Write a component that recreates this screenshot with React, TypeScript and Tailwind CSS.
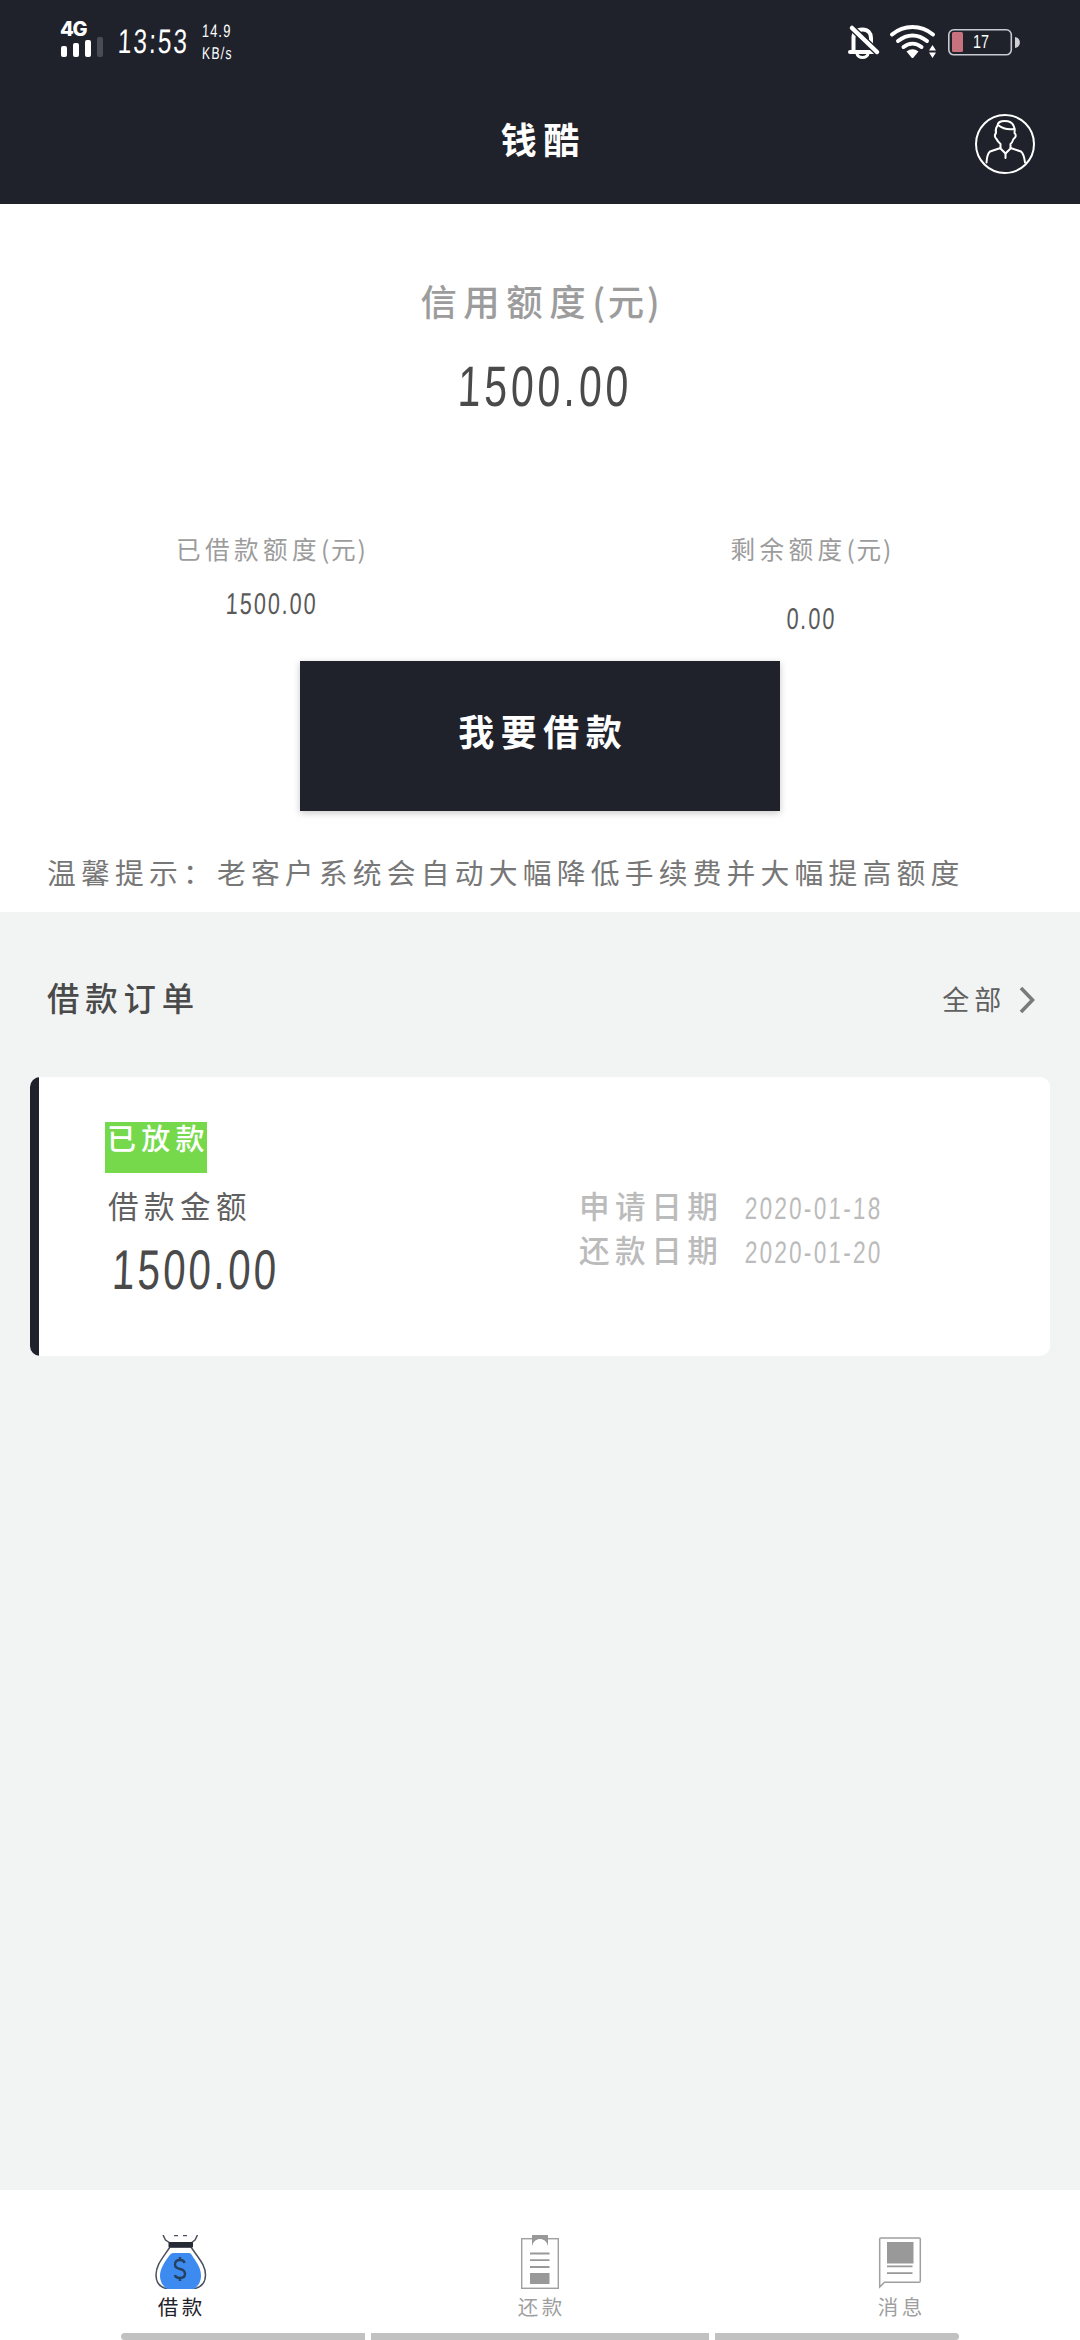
import React from "react";

const CJK = "font-['Noto_Sans_CJK_SC',sans-serif] tracking-[0.18em] whitespace-nowrap";
const NUM = "font-['Liberation_Sans',sans-serif] whitespace-nowrap scale-x-[0.72] -skew-x-3";

function StatusBar() {
  return (
    <div className="flex h-[84px] items-start">
      <div className="ml-[60px] mt-[20px] w-[44px]">
        <div className="font-['Inter',sans-serif] text-[20px] font-extrabold leading-[19px] tracking-[-0.06em]">4G</div>
        <svg width="44" height="20" viewBox="0 0 44 20" className="-mt-[2px]">
          <rect x="1" y="9" width="6" height="11" rx="2" fill="#fff" />
          <rect x="13" y="6" width="6" height="14" rx="2" fill="#fff" />
          <rect x="25" y="3" width="6" height="17" rx="2" fill="#fff" />
          <rect x="37" y="0" width="6" height="20" rx="2" fill="#4b4b55" />
        </svg>
      </div>
      <div className={`${NUM} ml-[14px] mt-[25px] w-[70px] origin-left text-[34px] leading-[32px] tracking-[0.08em]`}>13:53</div>
      <div className="ml-[14px] mt-[20px] w-[40px]">
        <div className={`${NUM} origin-left text-[18px] leading-[22px] tracking-[0.08em]`}>14.9</div>
        <div className={`${NUM} mt-[1px] origin-left text-[17px] leading-[22px] tracking-[0.1em]`}>KB/s</div>
      </div>
      <svg className="ml-auto mr-[50px] mt-[20px]" width="184" height="44" viewBox="846 20 184 44" fill="none">
        <path d="M853.500 51V38C853.500 32 857 29.500 862.500 29.500C868 29.500 871 33 871 38V46" stroke="#fff" strokeWidth="4" />
        <path d="M850 52H874" stroke="#fff" strokeWidth="4" strokeLinecap="round" />
        <path d="M857 53.500C857.500 58.800 867.500 58.800 868 53.500" stroke="#fff" strokeWidth="3" />
        <path d="M852 28L877 52" stroke="#1f222b" strokeWidth="7" />
        <path d="M852 28L877 52" stroke="#fff" strokeWidth="4.500" strokeLinecap="round" />
        <path d="M892 34.500C904 24.500 921 24.500 933 34.500" stroke="#fff" strokeWidth="4" strokeLinecap="round" />
        <path d="M898 41C907 33.500 918 33.500 927 41" stroke="#fff" strokeWidth="4" strokeLinecap="round" />
        <path d="M903.500 47C909 42.500 916 42.500 921.500 47" stroke="#fff" strokeWidth="4" strokeLinecap="round" />
        <path d="M906.500 51.500Q912.500 47 918.500 51.500L913.500 57.500Q912.500 58.500 911.500 57.500Z" fill="#fff" />
        <path d="M929 50.500L932.500 45L936 50.500ZM929 52.500H936L932.500 58Z" fill="#fff" />
        <rect x="948.800" y="29.800" width="62.500" height="25" rx="5" stroke="#c9c9d1" strokeWidth="1.600" />
        <rect x="952" y="32" width="11" height="20" rx="1.500" fill="#c8727e" />
        <path d="M1015 37C1021.500 38 1021.500 47 1015 48Z" fill="#cfcfd4" />
        <text x="973" y="48" fill="#fff" fontFamily="Liberation Sans" fontSize="19" textLength="16" lengthAdjust="spacingAndGlyphs">17</text>
      </svg>
    </div>
  );
}

function Header() {
  return (
    <header className="h-[204px] shrink-0 bg-[#1f222b] text-white">
      <StatusBar />
      <div className="grid h-[120px] grid-cols-[1fr_auto_1fr] items-start">
        <span />
        <h1 className={`${CJK} mt-[29px] pl-[0.18em] text-[36px] font-bold leading-[50px]`}>钱酷</h1>
        <svg className="mr-[44px] mt-[29px] justify-self-end" width="62" height="62" viewBox="974 113 62 62" fill="none" stroke="#fff" strokeWidth="2" strokeLinejoin="round" strokeLinecap="round">
          <circle cx="1005" cy="144" r="29" />
          <path d="M997.500 125.500C998 119.500 1011 119.500 1013.500 125.500Q1015.500 129 1014.500 133Q1017.500 136 1013.500 139Q1012 143 1010.500 144V148.500L1005.500 153.500L1000.500 148.500V144Q998 142 996.500 139Q993.500 136 996 133Q995 129 997.500 125.500Z" />
          <path d="M998 125Q1005 130.500 1014 129" />
          <path d="M1000.500 148L990 151.500Q987 154 986.500 162.500M1010.500 148L1021 151.500Q1024 154 1025 162.500M1005.500 153.500V158" />
        </svg>
      </div>
    </header>
  );
}

function Unit() {
  return <span className="tracking-[0.07em]">(元)</span>;
}

function CreditPanel() {
  return (
    <section className="flex h-[708px] shrink-0 flex-col items-center bg-white">
      <div className={`${CJK} mt-[71px] pl-[0.07em] text-[36.4px] font-medium leading-[50px] text-[#9c9c9c]`}>信用额度<Unit /></div>
      <div className={`${NUM} mt-[31px] pl-[14px] text-[57px] leading-[60px] tracking-[0.09em] text-[#4a4a4a]`}>1500.00</div>
      <div className="mt-[112px] grid h-[133px] w-full grid-cols-2 text-center">
        <div>
          <div className={`${CJK} pl-[0.14em] text-[24.6px] leading-[40px] text-[#9c9c9c]`}>已借款额度<Unit /></div>
          <div className={`${NUM} mt-[16px] pl-[5px] text-[30px] leading-[40px] tracking-[0.09em] text-[#5a5a5a]`}>1500.00</div>
        </div>
        <div>
          <div className={`${CJK} pl-[0.14em] text-[24.6px] leading-[40px] text-[#9c9c9c]`}>剩余额度<Unit /></div>
          <div className={`${NUM} mt-[31px] pl-[4px] text-[30px] leading-[40px] tracking-[0.09em] text-[#5a5a5a]`}>0.00</div>
        </div>
      </div>
      <button className={`${CJK} h-[150px] w-[480px] bg-[#1f222b] pb-[12px] pl-[0.18em] text-[36px] font-bold leading-[50px] text-white shadow-[0_2px_7px_rgba(0,0,0,0.22)]`}>我要借款</button>
      <p className={`${CJK} ml-[47px] mt-[41px] self-start text-[28.8px] leading-[40px] text-[#777]`}>温馨提示：老客户系统会自动大幅降低手续费并大幅提高额度</p>
    </section>
  );
}

function DateRow({ label, date }: { label: string; date: string }) {
  return (
    <div className="flex h-[44px]">
      <span className={`${CJK} w-[166px] text-[30.6px] font-medium leading-[40px] text-[#bbb]`}>{label}</span>
      <span className={`${NUM} mt-[2px] origin-left text-[31px] leading-[44px] tracking-[0.105em] text-[#bbb]`}>{date}</span>
    </div>
  );
}

function Orders() {
  return (
    <section className="flex-1 px-[30px]">
      <div className="flex h-[165px] items-start justify-between pl-[17px] pr-[13px] pt-[65px]">
        <h2 className={`${CJK} text-[32.4px] font-medium leading-[40px] text-[#4a4a4a]`}>借款订单</h2>
        <div className="flex items-center">
          <span className={`${CJK} mt-[2px] text-[27px] leading-[40px] text-[#606060]`}>全部</span>
          <svg className="ml-[12px] mt-[4px]" width="19" height="30" viewBox="0 0 19 30" fill="none">
            <path d="M3 3L14.500 15L3 27" stroke="#7a7a7a" strokeWidth="3.600" />
          </svg>
        </div>
      </div>
      <article className="flex h-[279px] overflow-hidden rounded-[10px] bg-white">
        <div className="w-[9px] bg-[#1f222b]" />
        <div className="w-[470px] pl-[66px] pt-[45px]">
          <div className="h-[51px] w-[102px] bg-[#75d94b] pl-[2px]">
            <span className={`${CJK} block text-[29px] font-medium leading-[31px] text-white`}>已放款</span>
          </div>
          <div className={`${CJK} mt-[12px] pl-[3px] text-[30.5px] leading-[40px] text-[#606060]`}>借款金额</div>
          <div className={`${NUM} mt-[15px] w-fit origin-left pl-[10px] text-[56px] leading-[60px] tracking-[0.075em] text-[#4a4a4a]`}>1500.00</div>
        </div>
        <div className="ml-[70px] mt-[108px]">
          <DateRow label="申请日期" date="2020-01-18" />
          <DateRow label="还款日期" date="2020-01-20" />
        </div>
      </article>
    </section>
  );
}

function BagIcon() {
  return (
    <svg width="54" height="54" viewBox="153 2235 54 54" fill="none">
      <path d="M163 2235L165.500 2240L170 2243M197.500 2235L195 2240L191 2243M174 2235.500H178M183 2235.500H187" stroke="#4b505c" strokeWidth="1.500" />
      <path d="M170 2247C162 2259 156 2265 156 2275C156 2283 160 2287 166 2288.500H195C201 2287 205.500 2283 205.500 2275C205.500 2265 199 2259 191 2247Z" fill="#fff" stroke="#4b505c" strokeWidth="1.500" />
      <path d="M173 2253H189Q191 2253 193 2257C198 2264 201 2269 201 2276Q201 2284 194 2289H167Q160 2284 160 2276C160 2269 164 2263 169 2256Q171 2253 173 2253Z" fill="#3d8bf0" />
      <rect x="168.500" y="2242" width="24.500" height="5.500" rx="1" fill="#252a35" />
      <path d="M184.500 2263Q184 2260 180 2260Q175 2260 175 2264.500Q175 2268 180 2269Q185 2270 185 2274Q185 2278 180 2278Q175.500 2278 175 2275M180 2257V2260M180 2278V2281" stroke="#25415f" strokeWidth="2.400" />
    </svg>
  );
}

function BillIcon() {
  return (
    <svg width="54" height="54" viewBox="513 2235 54 54" fill="none">
      <rect x="521.700" y="2238.700" width="36.600" height="49.600" stroke="#9f9f9f" strokeWidth="1.400" />
      <path d="M532 2235H548V2246Q546 2239 540 2239Q534 2239 532 2246Z" fill="#999" />
      <path d="M533 2246Q535 2239 540 2239Q545 2239 547 2246Z" fill="#fff" />
      <path d="M530 2253.500H549.500M530 2260.200H549.500M530 2267H549.500" stroke="#999" strokeWidth="1.800" />
      <rect x="530" y="2273" width="19.500" height="11" fill="#999" />
    </svg>
  );
}

function MessageIcon() {
  return (
    <svg width="54" height="54" viewBox="873 2235 54 54" fill="none">
      <path d="M879.700 2287V2239Q879.700 2238 881 2238H919Q920.300 2238 920.300 2239V2281Q920.300 2282.300 919 2282.300H884.500Z" stroke="#9f9f9f" strokeWidth="1.500" />
      <rect x="887" y="2242" width="26.500" height="21.500" fill="#999" />
      <path d="M887 2266.300H912.500M887 2273.200H912.500" stroke="#999" strokeWidth="1.700" />
    </svg>
  );
}

function BottomNav() {
  const items = [
    { label: "借款", icon: <BagIcon />, color: "text-[#1f222b]" },
    { label: "还款", icon: <BillIcon />, color: "text-[#9f9f9f]" },
    { label: "消息", icon: <MessageIcon />, color: "text-[#9f9f9f]" },
  ];
  return (
    <nav className="flex h-[150px] shrink-0 flex-col bg-white">
      <div className="grid h-[143px] grid-cols-3 pt-[45px]">
        {items.map((item) => (
          <div key={item.label} className="flex flex-col items-center">
            {item.icon}
            <span className={`${CJK} mt-[2px] pl-[0.18em] text-[20.5px] leading-[30px] ${item.color}`}>{item.label}</span>
          </div>
        ))}
      </div>
      <div className="flex h-[7px] gap-[6px] px-[121px]">
        <div className="w-[244px] rounded-l-full bg-[#c1c1c1]" />
        <div className="w-[338px] bg-[#c1c1c1]" />
        <div className="w-[244px] rounded-r-full bg-[#c1c1c1]" />
      </div>
    </nav>
  );
}

export default function App() {
  return (
    <main className="flex h-[2340px] w-[1080px] flex-col overflow-hidden bg-[#f2f4f3]">
      <Header />
      <CreditPanel />
      <Orders />
      <BottomNav />
    </main>
  );
}
